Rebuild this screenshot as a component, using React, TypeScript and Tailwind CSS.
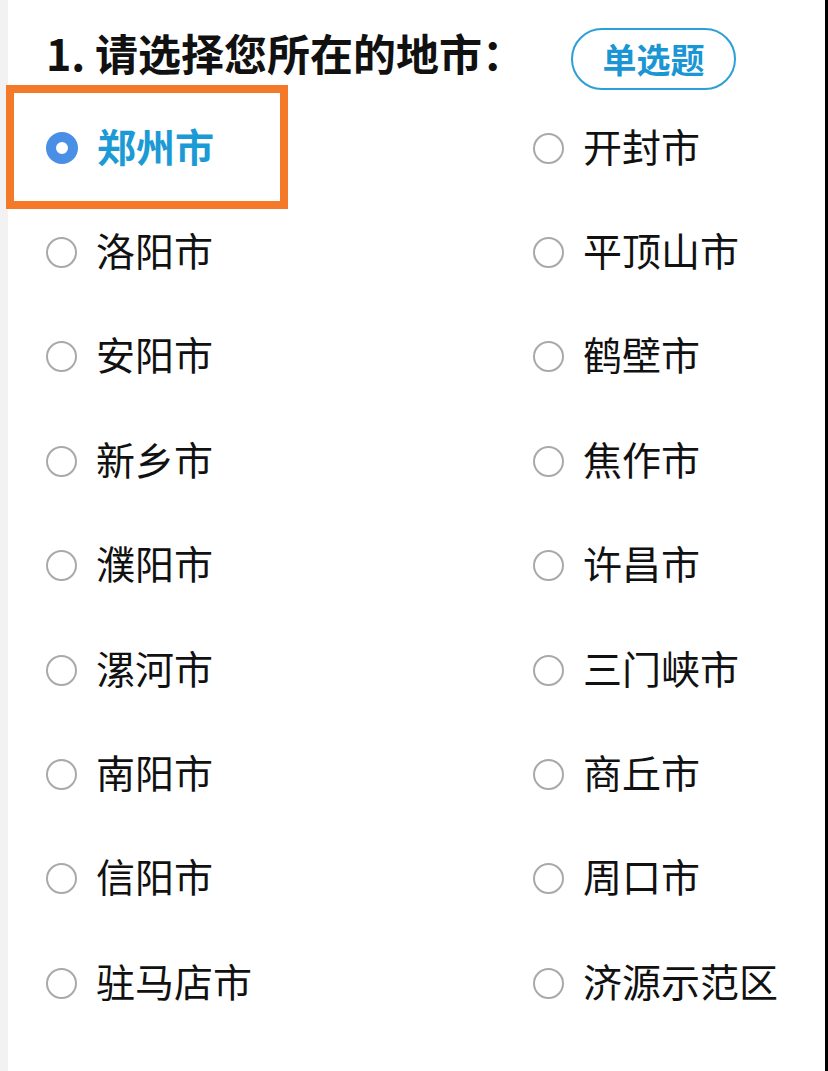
import React from "react";

const cities = [
  "郑州市",
  "开封市",
  "洛阳市",
  "平顶山市",
  "安阳市",
  "鹤壁市",
  "新乡市",
  "焦作市",
  "濮阳市",
  "许昌市",
  "漯河市",
  "三门峡市",
  "南阳市",
  "商丘市",
  "信阳市",
  "周口市",
  "驻马店市",
  "济源示范区",
];

function Radio({ checked }: { checked: boolean }) {
  if (checked) {
    return <span className="block h-[32px] w-[32px] shrink-0 rounded-full border-[10px] border-[#4a8fe6] bg-white" />;
  }
  return <span className="block h-[31px] w-[31px] shrink-0 rounded-full border-[2.5px] border-[#a9a9a9] bg-white" />;
}

export default function App() {
  const selected = "郑州市";

  return (
    <div
      className="relative flex min-h-[1071px] w-[828px] bg-white"
      style={{ fontFamily: '"Noto Sans CJK SC", "Noto Sans", sans-serif' }}
    >
      <div className="w-[8px] shrink-0 bg-[#f2f2f2]" />

      <div className="flex-1 pl-[38px]">
        {/* Question title */}
        <div className="flex h-[96px] items-center gap-[46px] pt-[8px]">
          <h1 className="text-[43px] font-bold leading-none text-[#111]">1. 请选择您所在的地市：</h1>
          <span className="mt-[14px] flex h-[62px] w-[165px] items-center justify-center rounded-full border-[2.5px] border-[#2b9fd6] text-[34px] font-bold leading-none text-[#1a96d4]">
            单选题
          </span>
        </div>

        {/* Options */}
        <div className="grid grid-cols-[487px_1fr]">
          {cities.map((city) => {
            const checked = city === selected;
            return (
              <div key={city} className="flex h-[104.4px] items-center gap-[19px]">
                <Radio checked={checked} />
                <span
                  className={
                    checked
                      ? "mb-[6px] text-[39px] font-bold leading-none text-[#1c9ad6]"
                      : "mb-[6px] text-[39px] leading-none text-[#111]"
                  }
                >
                  {city}
                </span>
              </div>
            );
          })}
        </div>
      </div>

      <div className="w-[3px] shrink-0 bg-black" />

      {/* highlight annotation */}
      <div className="pointer-events-none absolute left-[6px] top-[85px] h-[124px] w-[282px] border-[8px] border-[#f47a2a]" />
    </div>
  );
}
